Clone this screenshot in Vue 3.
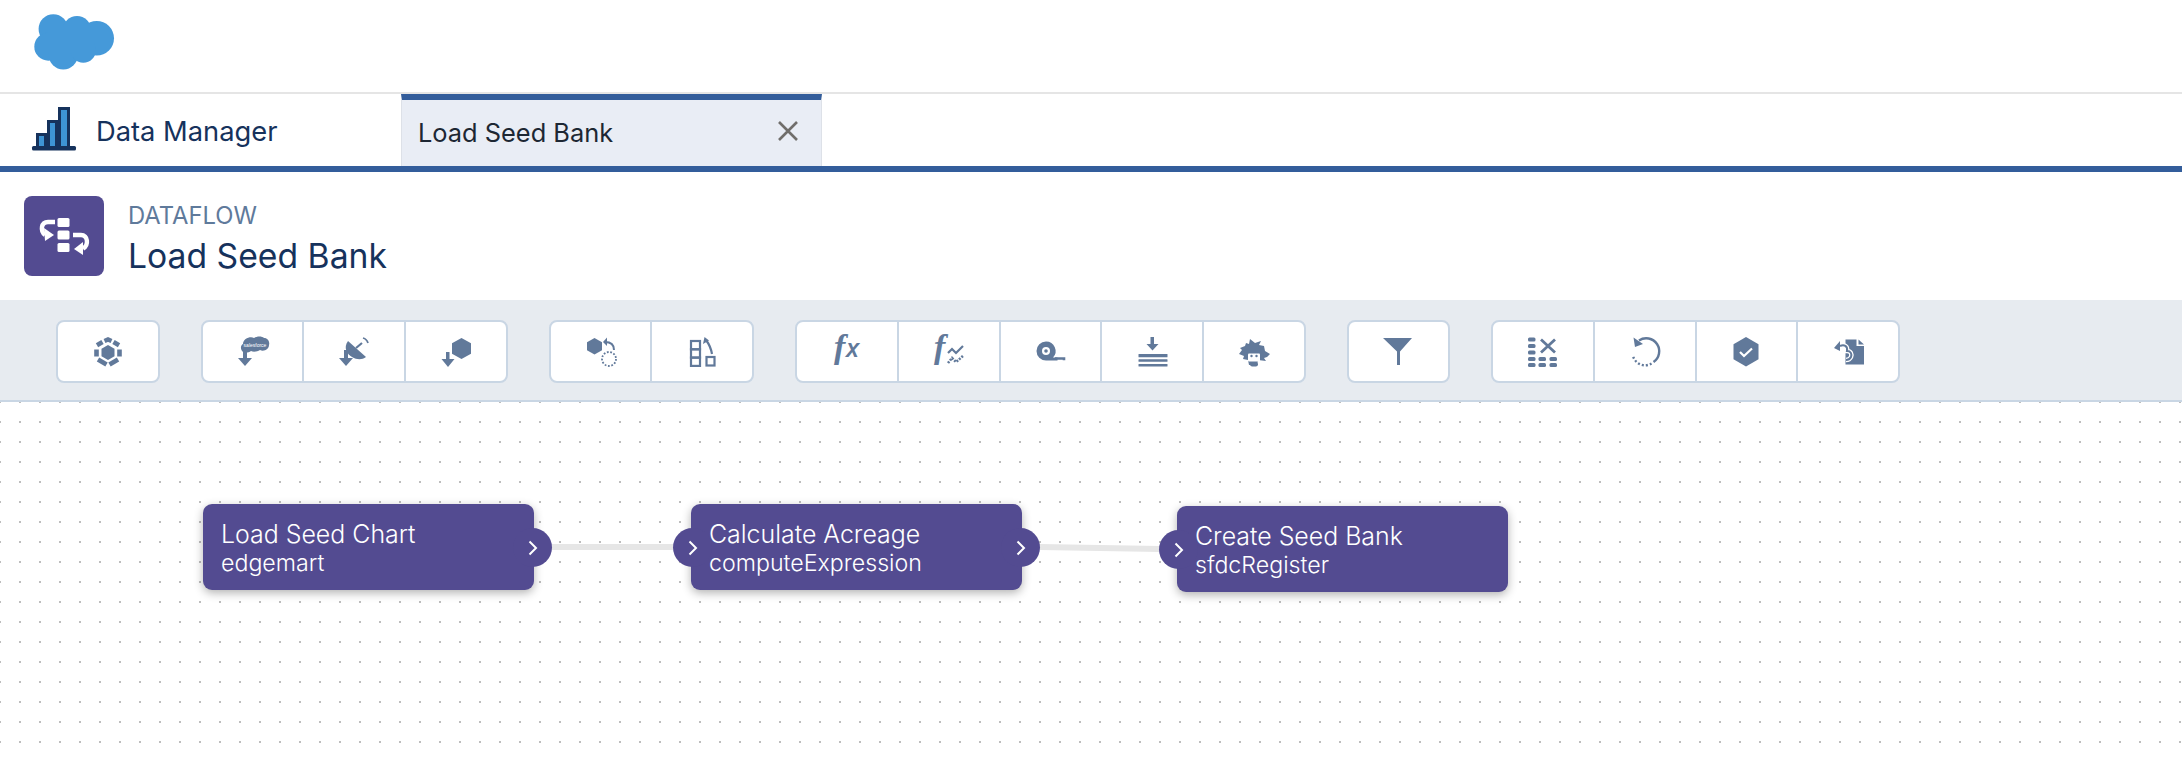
<script setup>
const nodes = [
  { id: 'chart', title: 'Load Seed Chart', type: 'edgemart', left: 203, top: 102, input: false, output: true },
  { id: 'acreage', title: 'Calculate Acreage', type: 'computeExpression', left: 691, top: 102, input: true, output: true },
  { id: 'bank', title: 'Create Seed Bank', type: 'sfdcRegister', left: 1177, top: 104, input: true, output: false },
];
</script>

<template>
  <div class="page">
    <header class="brand">
      <svg class="logo" width="110" height="80" viewBox="0 0 110 80" fill="#4599d9">
        <circle cx="33.3" cy="24" r="14.7" />
        <circle cx="57" cy="25" r="14" />
        <circle cx="76.7" cy="33.3" r="17.3" />
        <circle cx="28.3" cy="41.7" r="14" />
        <circle cx="43.3" cy="50" r="14.5" />
        <circle cx="63.3" cy="45" r="12.7" />
        <rect x="28" y="22" width="46" height="26" />
      </svg>
    </header>

    <nav class="tabs">
      <div class="app-tab">
        <svg class="app-icon" width="46" height="46" viewBox="0 0 46 46">
          <g fill="#3e94d4" stroke="#16325c" stroke-width="3">
            <rect x="6.5" y="28.5" width="8" height="13" />
            <rect x="17.5" y="15.5" width="8" height="26" />
            <rect x="28.5" y="2.5" width="9" height="39" />
          </g>
          <rect x="1" y="40" width="44" height="4.5" rx="1.5" fill="#16325c" />
        </svg>
        <span>Data Manager</span>
      </div>
      <div class="work-tab">
        <span>Load Seed Bank</span>
        <svg width="22" height="22" viewBox="0 0 22 22" stroke="#706e6b" stroke-width="2.6">
          <path d="M2 2l18 18M20 2L2 20" />
        </svg>
      </div>
    </nav>

    <section class="title-bar">
      <div class="flow-icon">
        <svg width="80" height="80" viewBox="0 0 80 80" fill="#fff">
          <rect x="33.5" y="22" width="12" height="9" rx="1.5" />
          <rect x="33.5" y="34.5" width="12" height="9" rx="1.5" />
          <rect x="33.5" y="47" width="12" height="9" rx="1.5" />
          <path d="M31 26H24c-7 0-8 9-3 13" fill="none" stroke="#fff" stroke-width="4.4" />
          <path d="M20 32l10 7-9 6z" />
          <path d="M49 39h8c7 0 8 10 2 13.500" fill="none" stroke="#fff" stroke-width="4.4" />
          <path d="M59 46l-9 7 9 6z" />
        </svg>
      </div>
      <div class="title-text">
        <div class="eyebrow">DATAFLOW</div>
        <h1>Load Seed Bank</h1>
      </div>
    </section>

    <section class="toolbar">
      <div class="btn-group">
        <button class="tool">
          <svg class="ico" viewBox="-26 -26 52 52">
            <path d="M0-7l6.5 3.700v7.500L0 8l-6.500-3.800v-7.500z" fill="currentColor" />
            <g fill="none" stroke="currentColor" stroke-width="4.6">
              <path d="M-3.500-11L0-12.500 3.500-11" />
              <path d="M5.500-10l5.500 3.200" />
              <path d="M-5.500-10L-11-6.800" />
              <path d="M11.500-2.500v7" />
              <path d="M-11.500-2.500v7" />
              <path d="M10 7.500l-8.500 5" />
              <path d="M-10 7.500l8.500 5" />
            </g>
          </svg>
        </button>
      </div>

      <div class="btn-group">
        <button class="tool">
          <svg class="ico" viewBox="-26 -26 52 52">
            <path d="M-11-1c-2-3-1-6 1-7 0-5 7-8 11-6 3-2 8-2 10 0 4 0 6 4 5 7 0 4-5 7-9 5-3 2-7 2-9 1-3 2-7 2-9 0z" fill="currentColor" />
            <text x="2" y="-5" class="cloud-text">salesforce</text>
            <path d="M-10-2h4v8h5l-7 8-7-8h5z" fill="currentColor" />
          </svg>
        </button>
        <button class="tool">
          <svg class="ico" viewBox="-26 -26 52 52">
            <path d="M-6-11L12 5C8 8 3 8-2 5-7 2-11-4-6-11z" fill="currentColor" />
            <path d="M2-4l6-5" stroke="currentColor" stroke-width="2.2" />
            <path d="M9-14c2 .5 4 2 5 5" fill="none" stroke="currentColor" stroke-width="1.8" />
            <path d="M-10-2h4v8h5l-7 8-7-8h5z" fill="currentColor" />
          </svg>
        </button>
        <button class="tool">
          <svg class="ico" viewBox="-26 -26 52 52">
            <path d="M5.500-14l9.500 5.200v10.500L5.500 7-4 1.700V-8.800z" fill="currentColor" />
            <path d="M-10 0h3.500v7h5l-6.500 8-6.500-8h4.500z" fill="currentColor" />
          </svg>
        </button>
      </div>

      <div class="btn-group">
        <button class="tool">
          <svg class="ico" viewBox="-26 -26 52 52">
            <path d="M-6.500-14l7.500 4.200v8L-6.500 2.500-14-1.800v-8z" fill="currentColor" />
            <circle cx="8" cy="7" r="7" fill="none" stroke="currentColor" stroke-width="1.8" stroke-dasharray="1.800 1.600" />
            <path d="M13-2c0-6-4-8-9-8" fill="none" stroke="currentColor" stroke-width="2" />
            <path d="M6-14.500l-4 4.500 4 4z" fill="currentColor" />
          </svg>
        </button>
        <button class="tool">
          <svg class="ico" viewBox="-26 -26 52 52" fill="none" stroke="currentColor" stroke-width="2.2">
            <rect x="-11" y="-11" width="9" height="8.300" />
            <rect x="-11" y="-2.700" width="9" height="8.300" />
            <rect x="-11" y="5.600" width="9" height="8.300" />
            <rect x="4.500" y="5" width="8" height="8.500" />
            <path d="M10 2C9-4 7-8 4-12" />
            <path d="M2.500-15l-1.500 7 6-3.500z" fill="currentColor" stroke="none" />
          </svg>
        </button>
      </div>

      <div class="btn-group">
        <button class="tool">
          <svg class="ico" viewBox="-26 -26 52 52">
            <text x="-13" y="6" class="fx">f</text>
            <text x="-1" y="5" class="fx-x">x</text>
          </svg>
        </button>
        <button class="tool">
          <svg class="ico" viewBox="-26 -26 52 52">
            <text x="-15" y="6" class="fx">f</text>
            <path d="M-1 1l4-4 4 4 7-7" fill="none" stroke="currentColor" stroke-width="2.2" />
            <path d="M-1 11l4-5 4 4 7-6" fill="none" stroke="currentColor" stroke-width="2.6" stroke-dasharray="2 1.200" />
          </svg>
        </button>
        <button class="tool">
          <svg class="ico" viewBox="-26 -26 52 52">
            <path d="M-4-10.500a9.500 9.500 0 0 0 0 19h11.500v-3H3A9.500 9.500 0 0 0-4-10.500z" fill="currentColor" />
            <circle cx="-4" cy="-1" r="4" fill="#fff" />
            <circle cx="-4" cy="-1" r="1.800" fill="currentColor" />
            <path d="M5 6.500h9v1.800" fill="none" stroke="currentColor" stroke-width="2.6" />
          </svg>
        </button>
        <button class="tool">
          <svg class="ico" viewBox="-26 -26 52 52" fill="currentColor">
            <path d="M-1.500-15h3.500v7h4.500L.5-1.500-5.500-8h4z" />
            <rect x="-13.500" y="2" width="29" height="3.300" rx=".5" />
            <rect x="-13.500" y="7.300" width="29" height="2.500" rx=".5" />
            <rect x="-13.500" y="12" width="29" height="2.500" rx=".5" />
          </svg>
        </button>
        <button class="tool">
          <svg class="ico" viewBox="-26 -26 52 52">
            <path d="M-4-13L1-9l6-2-2 4 5 1 1 5 5 3-3 3-3 1 2 3-8-1-1 5H-5l-1-5-5-1 1-3-5-2 3-4-2-2 5-2 1-3 3 1z" fill="currentColor" />
            <rect x="-6" y="1.500" width="12" height="8" rx="1" fill="#fff" />
            <circle cx="-2.500" cy="4" r="1.200" fill="currentColor" />
            <circle cx="2.500" cy="4" r="1.200" fill="currentColor" />
            <rect x="-4" y="10" width="8" height="4.500" rx="2.200" fill="currentColor" />
          </svg>
        </button>
      </div>

      <div class="btn-group">
        <button class="tool">
          <svg class="ico" viewBox="-26 -26 52 52">
            <path d="M-15-14h29L2-.5V13h-3V-.5z" fill="currentColor" />
          </svg>
        </button>
      </div>

      <div class="btn-group">
        <button class="tool">
          <svg class="ico" viewBox="-26 -26 52 52" fill="currentColor">
            <rect x="-15" y="-14.500" width="7.500" height="4" rx="1.500" />
            <rect x="-15" y="-8" width="7.500" height="4" rx="1.500" />
            <rect x="-15" y="-1.500" width="7.500" height="4" rx="1.500" />
            <rect x="-15" y="5" width="7.500" height="4" rx="1.500" />
            <rect x="-15" y="11" width="7.500" height="4" rx="1.500" />
            <rect x="-4.500" y="5" width="7.500" height="4" rx="1.500" />
            <rect x="-4.500" y="11" width="7.500" height="4" rx="1.500" />
            <rect x="6.500" y="5" width="7.500" height="4" rx="1.500" />
            <rect x="6.500" y="11" width="7.500" height="4" rx="1.500" />
            <path d="M-2-12.500L12 .5M12-12.500L-2 .5" stroke="currentColor" stroke-width="2.8" />
          </svg>
        </button>
        <button class="tool">
          <svg class="ico" viewBox="-26 -26 52 52" fill="none" stroke="currentColor" stroke-width="2.4">
            <path d="M-6-11.500A12.500 12.500 0 0 1 8.500 10" />
            <path d="M6.500 11.500A12.500 12.500 0 0 1-12 4" stroke-dasharray="2 2" />
            <path d="M-11.500-14.500L-10-5-2-8z" fill="currentColor" stroke="none" />
          </svg>
        </button>
        <button class="tool">
          <svg class="ico" viewBox="-26 -26 52 52">
            <path d="M0-15l12.500 7.200v15L0 14.500-12.500 7.200v-15z" fill="currentColor" />
            <path d="M-6 0l4 4 8-7.500" fill="none" stroke="#fff" stroke-width="2.2" />
          </svg>
        </button>
        <button class="tool">
          <svg class="ico" viewBox="-26 -26 52 52">
            <path d="M-2.500-12.500H8.500V-6H16V12.500H-2.500z" fill="currentColor" />
            <path d="M10.500-12.500L16-7.500h-5.500z" fill="currentColor" />
            <path d="M-8-6c4-2 8 0 7 5 4 0 5 3 4 6-1 2-3 3-5 3" fill="none" stroke="#fff" stroke-width="4.500" />
            <path d="M-8-6c4-2 8 0 7 5 4 0 5 3 4 6-1 2-3 3-5 3" fill="none" stroke="currentColor" stroke-width="2" />
            <path d="M-14-4l6-7v10z" fill="currentColor" />
          </svg>
        </button>
      </div>
    </section>

    <section class="canvas">
      <svg class="edges" width="2182" height="358">
        <line x1="552" y1="145" x2="673" y2="145" />
        <line x1="1040" y1="145" x2="1160" y2="147" />
      </svg>
      <div
        v-for="node in nodes"
        :key="node.id"
        class="node"
        :style="{ left: node.left + 'px', top: node.top + 'px' }"
      >
        <div class="node-title">{{ node.title }}</div>
        <div class="node-type">{{ node.type }}</div>
        <span v-if="node.input" class="port port-in">
          <svg width="10" height="16" viewBox="0 0 10 16"><path d="M1.500 1.500L8 8l-6.500 6.500" /></svg>
        </span>
        <span v-if="node.output" class="port port-out">
          <svg width="10" height="16" viewBox="0 0 10 16"><path d="M1.500 1.500L8 8l-6.500 6.500" /></svg>
        </span>
      </div>
    </section>
  </div>
</template>

<style scoped>
  .page {
    width: 2182px;
    height: 760px;
    overflow: hidden;
    background: #fff;
    font-family: 'Inter', 'Liberation Sans', sans-serif;
    color: #16325c;
  }

  .brand {
    height: 94px;
    padding: 5px 0 0 20px;
    box-sizing: border-box;
    border-bottom: 2px solid #e5e5e5;
  }

  .logo {
    display: block;
  }

  .tabs {
    display: flex;
    height: 78px;
    box-sizing: border-box;
    border-bottom: 6px solid #335d9b;
  }

  .app-tab {
    width: 401px;
    display: flex;
    align-items: center;
    gap: 19px;
    padding-left: 31px;
    box-sizing: border-box;
    font-size: 27.3px;
  }

  .app-icon {
    margin-top: -3px;
  }

  .app-tab span {
    margin-top: 2px;
  }

  .work-tab {
    width: 421px;
    display: flex;
    align-items: center;
    justify-content: space-between;
    padding: 6px 22px 0 16px;
    box-sizing: border-box;
    background: #e9edf5;
    border-top: 6px solid #335d9b;
    border-left: 1px solid #dde1e8;
    border-right: 1px solid #dde1e8;
    font-size: 25.4px;
    color: #1d2733;
  }

  .work-tab span {
    margin-top: -8px;
  }

  .work-tab svg {
    margin-top: -10px;
  }

  .title-bar {
    height: 128px;
    display: flex;
    align-items: flex-start;
    gap: 24px;
    padding: 24px 0 0 24px;
    box-sizing: border-box;
  }

  .flow-icon {
    width: 80px;
    height: 80px;
    border-radius: 8px;
    background: #534b91;
  }

  .flow-icon svg {
    display: block;
  }

  .title-text {
    padding-top: 6px;
  }

  .eyebrow {
    font-size: 23.8px;
    line-height: 28px;
    color: #5f7a9b;
  }

  h1 {
    margin: 6px 0 0;
    font-size: 33.7px;
    line-height: 40px;
    font-weight: 400;
  }

  .toolbar {
    height: 102px;
    display: flex;
    gap: 41px;
    padding: 20px 0 0 56px;
    box-sizing: border-box;
    background: #e7ebf0;
    border-bottom: 2px solid #c9d6e4;
  }

  .btn-group {
    display: flex;
    height: 63px;
    box-sizing: border-box;
    background: #fff;
    border: 2px solid #c9d6e4;
    border-radius: 8px;
  }

  .tool {
    width: 99.7px;
    padding: 0;
    display: flex;
    align-items: center;
    justify-content: center;
    background: none;
    border: none;
    color: #61799a;
  }

  .tool + .tool {
    border-left: 2px solid #c9d6e4;
    width: 101.7px;
  }

  .ico {
    width: 52px;
    height: 52px;
  }

  .cloud-text {
    font-family: 'Liberation Sans', sans-serif;
    font-size: 5px;
    fill: #fff;
    text-anchor: middle;
  }

  .fx {
    font-family: 'Liberation Serif', serif;
    font-style: italic;
    font-weight: 700;
    font-size: 34px;
    fill: currentColor;
  }

  .fx-x {
    font-family: 'Open Sans', sans-serif;
    font-style: italic;
    font-weight: 600;
    font-size: 26px;
    fill: currentColor;
  }

  .canvas {
    position: relative;
    height: 358px;
    background-image: radial-gradient(circle at 1px 1px, #bdbdbd 1px, transparent 1.2px);
    background-size: 20px 20px;
    background-position: -1px -1px;
  }

  .edges {
    position: absolute;
    left: 0;
    top: 0;
  }

  .edges line {
    stroke: #e6e6e6;
    stroke-width: 6;
  }

  .node {
    position: absolute;
    width: 331px;
    height: 86px;
    padding: 2px 0 0 18px;
    box-sizing: border-box;
    display: flex;
    flex-direction: column;
    justify-content: center;
    border-radius: 9px;
    background: #534b91;
    box-shadow: 0 3px 10px rgba(0, 0, 0, 0.3);
    color: #fff;
    font-weight: 300;
  }

  .node-title {
    font-size: 24.9px;
    line-height: 30px;
  }

  .node-type {
    font-size: 23.2px;
    line-height: 28px;
  }

  .port {
    position: absolute;
    top: 24px;
    width: 39px;
    height: 39px;
    display: flex;
    align-items: center;
    justify-content: center;
    border-radius: 50%;
    background: #534b91;
  }

  .port svg {
    fill: none;
    stroke: #fff;
    stroke-width: 2;
  }

  .port-out {
    right: -18px;
  }

  .port-in {
    left: -18px;
  }
</style>

<style>
  html, body {
    margin: 0;
    background: #fff;
  }
</style>
